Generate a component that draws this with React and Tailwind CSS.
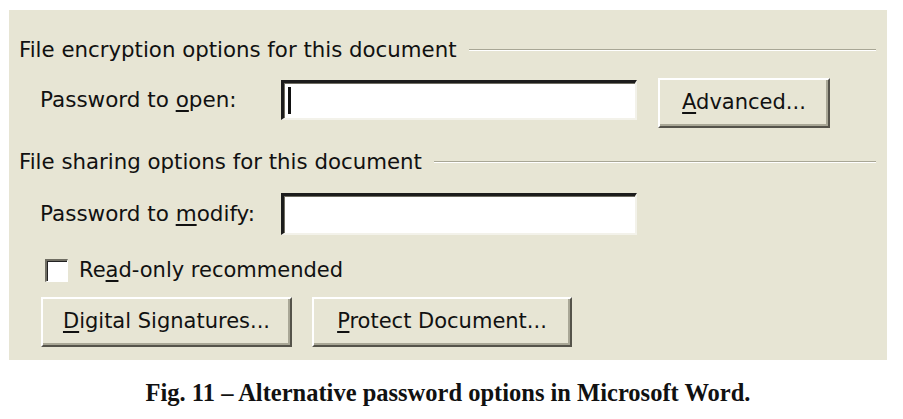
import React from "react";

const font = { fontFamily: '"DejaVu Sans", Tahoma, sans-serif' };

function U({ children }) {
  return <span className="underline decoration-[2px] underline-offset-[3px]">{children}</span>;
}

function Btn({ w, children }) {
  return (
    <div
      className={`${w} h-[50px] flex items-center justify-center bg-[#e7e5d4] border-t-2 border-l-2 border-t-white border-l-white border-r-2 border-b-2 border-r-[#55534a] border-b-[#55534a] shadow-[inset_-2px_-2px_0_#a9a796] text-[21px] text-[#111]`}
    >
      {children}
    </div>
  );
}

function Input({ h, caret }) {
  return (
    <div
      className={`w-[356px] ${h} bg-white border-t-[3px] border-l-[3px] border-t-[#1c1c1c] border-l-[#1c1c1c] border-r-2 border-b-2 border-r-[#f3f2ea] border-b-[#f3f2ea] shadow-[inset_1px_1px_0_#6f6d62] flex items-center pl-[4px]`}
    >
      {caret && <div className="w-[3px] h-[27px] bg-[#111]" />}
    </div>
  );
}

function Heading({ children }) {
  return (
    <div className="h-[20px] flex items-center">
      <span className="text-[21.3px] leading-none text-[#111] whitespace-nowrap">{children}</span>
      <div className="flex-1 ml-[12px] h-[2px] bg-[#a8a695] border-b border-b-white" />
    </div>
  );
}

export default function App() {
  return (
    <div className="w-[903px] h-[419px] bg-white pt-[10px] pl-[9px]" style={font}>
      <div className="w-[878px] h-[350px] bg-[#e7e5d4] flex flex-col pl-[10px] pr-[11px] pt-[30px]">
        <Heading>File encryption options for this document</Heading>
        <div className="mt-[18px] flex items-start h-[50px]">
          <div className="w-[262px] pl-[21px] pt-[11px] text-[21.5px] leading-none text-[#111]">
            Password to <U>o</U>pen:
          </div>
          <div className="mt-[2px]">
            <Input h="h-[40px]" caret />
          </div>
          <div className="ml-[21px]">
            <Btn w="w-[172px]">
              <span>
                <U>A</U>dvanced...
              </span>
            </Btn>
          </div>
        </div>
        <div className="mt-[24px]">
          <Heading>File sharing options for this document</Heading>
        </div>
        <div className="mt-[21px] flex items-center h-[42px]">
          <div className="w-[262px] pl-[21px] text-[21.5px] leading-none text-[#111]">
            Password to <U>m</U>odify:
          </div>
          <Input h="h-[42px]" />
        </div>
        <div className="mt-[23px] flex items-center h-[24px] pl-[26px]">
          <div className="w-[23px] h-[23px] bg-white border-t-2 border-l-2 border-t-[#6f6d62] border-l-[#6f6d62] border-r border-b border-r-white border-b-white shadow-[inset_1px_1px_0_#222]" />
          <span className="ml-[11px] text-[21px] leading-none text-[#111]">
            Re<U>a</U>d-only recommended
          </span>
        </div>
        <div className="mt-[15px] flex pl-[22px] gap-[20px]">
          <Btn w="w-[251px]">
            <span>
              <U>D</U>igital Signatures...
            </span>
          </Btn>
          <Btn w="w-[260px]">
            <span>
              <U>P</U>rotect Document...
            </span>
          </Btn>
        </div>
      </div>
      <div
        className="w-[878px] text-center mt-[21px] text-[24.5px] leading-none font-bold text-[#111]"
        style={{ fontFamily: '"Liberation Serif", "DejaVu Serif", serif' }}
      >
        Fig. 11 – Alternative password options in Microsoft Word.
      </div>
    </div>
  );
}
